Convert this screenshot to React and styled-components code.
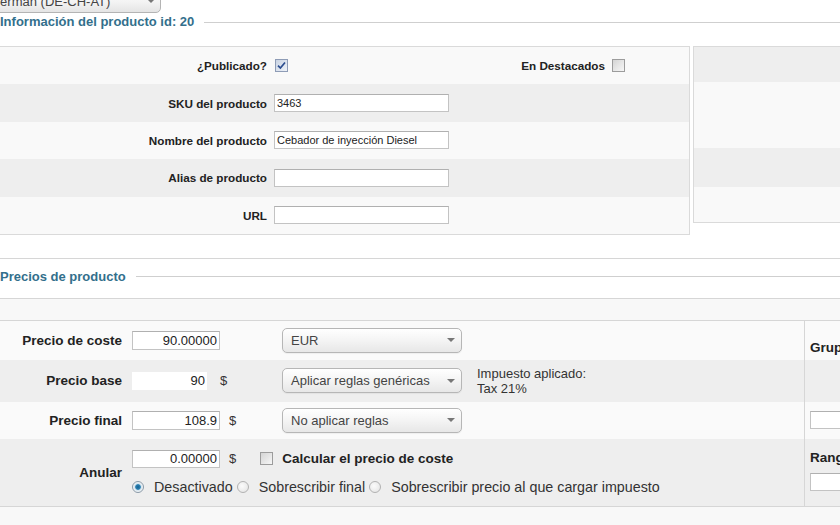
import React from 'react';
import styled, { createGlobalStyle } from 'styled-components';

const Global = createGlobalStyle`
  html, body { margin: 0; padding: 0; background: #fff; overflow: hidden; }
  body { font-family: "Liberation Sans", Arial, sans-serif; color: #333; }
`;

const Page = styled.div`
  width: 840px;
  height: 525px;
  overflow: hidden;
  background: #fff;
`;

const LangSelect = styled.div`
  box-sizing: border-box;
  width: 180px;
  height: 24px;
  margin: -11px 0 0 -19px;
  padding: 0 5px 0 8px;
  display: flex;
  align-items: center;
  justify-content: space-between;
  border: 1px solid #b4b4b4;
  border-radius: 5px;
  background: linear-gradient(#ffffff, #f3f3f3 55%, #e4e4e4);
  font-size: 13px;
  color: #444;
`;

const Arrow = styled.span`
  width: 0;
  height: 0;
  border-left: 4px solid transparent;
  border-right: 4px solid transparent;
  border-top: 4px solid #777;
`;

const Legend = styled.div`
  display: flex;
  align-items: center;
  gap: 10px;
  margin-top: ${p => p.$mt || 0}px;
  font-size: 13px;
  line-height: 16px;
  font-weight: bold;
  color: #336f8c;
  white-space: nowrap;
  &::after {
    content: '';
    flex: 1;
    border-top: 1px solid #cfcfcf;
  }
`;

const Panels = styled.div`
  display: flex;
  align-items: flex-start;
  margin-top: 16px;
`;

const InfoPanel = styled.div`
  box-sizing: border-box;
  flex: none;
  width: 691px;
  margin-left: -1px;
  border: 1px solid #dadada;
`;

const InfoRow = styled.div`
  display: grid;
  grid-template-columns: 267px 175px 149px 1fr;
  column-gap: 7px;
  align-items: center;
  height: 37.4px;
  background: ${p => (p.$alt ? '#eeeeee' : '#f9f9f9')};
`;

const InfoLabel = styled.div`
  text-align: right;
  font-size: 11.7px;
  font-weight: bold;
  color: #222;
  white-space: nowrap;
`;

const Cell = styled.div`
  display: flex;
  align-items: center;
`;

const SidePanel = styled.div`
  box-sizing: border-box;
  flex: none;
  width: 200px;
  margin-left: 3px;
  border: 1px solid #dadada;
`;

const SideRow = styled.div`
  height: ${p => p.$h}px;
  background: ${p => (p.$alt ? '#eeeeee' : '#f9f9f9')};
`;

const Rule = styled.div`
  margin-top: 23px;
  border-top: 1px solid #d6d6d6;
`;

const PriceTable = styled.div`
  margin-top: 13px;
  width: 960px;
  border-top: 1px solid #d6d6d6;
`;

const PriceHead = styled.div`
  height: 21px;
  background: #f8f8f8;
  border-bottom: 1px solid #d6d6d6;
`;

const PriceRow = styled.div`
  display: grid;
  grid-template-columns: 132px 150px 195px 327px 1fr;
  height: ${p => p.$h}px;
  background: ${p => (p.$alt ? '#eeeeee' : '#fafafa')};
`;

const PriceLabel = styled.div`
  display: flex;
  align-items: center;
  justify-content: flex-end;
  padding-right: 10px;
  font-size: 13.5px;
  font-weight: bold;
  color: #222;
  white-space: nowrap;
`;

const PriceCell = styled.div`
  display: flex;
  align-items: center;
  font-size: 13px;
  color: #333;
`;

const TaxNote = styled.div`
  font-size: 13px;
  line-height: 15px;
  color: #333;
`;

const SideCell = styled.div`
  display: flex;
  flex-direction: column;
  justify-content: ${p => p.$justify || 'center'};
  padding: ${p => p.$pad || '0'};
  padding-left: 5px;
  border-left: 1px solid #d6d6d6;
  font-size: 13.5px;
  line-height: 16px;
  font-weight: bold;
  color: #222;
  white-space: nowrap;
  overflow: hidden;
`;

const TextInput = styled.input`
  box-sizing: border-box;
  width: ${p => p.$w || 175}px;
  height: ${p => p.$h || 18}px;
  margin: 0;
  padding: 0 2px;
  border: ${p => (p.$plain ? '0' : '1px solid #c3c3c3')};
  border-top-color: ${p => (p.$plain ? 'transparent' : '#b0b0b0')};
  background: #fff;
  font-family: "Liberation Sans", Arial, sans-serif;
  font-size: ${p => p.$fs || 11}px;
  color: #222;
  text-align: ${p => (p.$right ? 'right' : 'left')};
  outline: none;
`;

const Currency = styled.span`
  margin-left: ${p => p.$gap || 9}px;
  font-size: 13px;
  color: #333;
`;

const Select = styled.div`
  box-sizing: border-box;
  width: 180px;
  height: 25px;
  padding: 0 6px 0 8px;
  display: flex;
  align-items: center;
  justify-content: space-between;
  border: 1px solid #b6b6b6;
  border-radius: 5px;
  background: linear-gradient(#ffffff, #f4f4f4 50%, #e7e7e7);
  box-shadow: 0 1px 1px rgba(0, 0, 0, 0.05);
  font-size: 13px;
  color: #444;
`;

const Box = styled.span`
  box-sizing: border-box;
  flex: none;
  display: inline-flex;
  align-items: center;
  justify-content: center;
  width: 13px;
  height: 13px;
  margin-left: ${p => p.$ml || 0}px;
  border: 1px solid ${p => (p.$checked ? '#8e9cb6' : '#9c9c9c')};
  background: ${p =>
    p.$checked
      ? 'linear-gradient(135deg, #c9d3e3, #eef2f8)'
      : 'linear-gradient(135deg, #d4d4d4, #f7f7f7)'};
`;

const Checkbox = ({ checked, ml }) => (
  <Box $checked={checked} $ml={ml}>
    {checked && (
      <svg width="9" height="9" viewBox="0 0 9 9">
        <path d="M1 4.6 L3.4 7 L8 1.5" fill="none" stroke="#2b4d8f" strokeWidth="1.7" />
      </svg>
    )}
  </Box>
);

const AnularBody = styled.div`
  grid-column: 2 / 5;
  display: flex;
  flex-direction: column;
  gap: 11px;
  padding-top: 11px;
`;

const Line = styled.div`
  display: flex;
  align-items: center;
`;

const CalcLabel = styled.span`
  margin-left: 9px;
  font-size: 13.5px;
  font-weight: bold;
  color: #222;
  white-space: nowrap;
`;

const RadioDot = styled.span`
  box-sizing: border-box;
  flex: none;
  width: 12px;
  height: 12px;
  border-radius: 50%;
  border: 1px solid ${p => (p.$on ? '#8a9aa8' : '#b2b2b2')};
  background: ${p =>
    p.$on
      ? 'radial-gradient(circle, #14618f 0, #2a80b2 2.4px, #cfe2ee 3.2px, #f6f6f6 5px)'
      : 'radial-gradient(circle at 40% 40%, #fbfbfb 0, #e2e2e2 100%)'};
`;

const RadioText = styled.span`
  margin: 0 4px 0 10px;
  font-size: 14.3px;
  line-height: 16px;
  color: #333;
  white-space: nowrap;
`;

const Radio = ({ on, children }) => (
  <>
    <RadioDot $on={on} />
    <RadioText>{children}</RadioText>
  </>
);

const SideInput = styled(TextInput)`
  margin-top: ${p => p.$mt || 0}px;
`;

const Tail = styled.div`
  border-top: 1px solid #d6d6d6;
  height: 30px;
  background: #f8f8f8;
`;

const infoRows = [
  { label: 'SKU del producto', value: '3463' },
  { label: 'Nombre del producto', value: 'Cebador de inyección Diesel' },
  { label: 'Alias de producto', value: '' },
  { label: 'URL', value: '' },
];

export default function App() {
  return (
    <>
      <Global />
      <Page>
        <LangSelect>
          <span>German (DE-CH-AT)</span>
          <Arrow />
        </LangSelect>

        <Legend $mt={1}>Información del producto id: 20</Legend>

        <Panels>
          <InfoPanel>
            <InfoRow>
              <InfoLabel>¿Publicado?</InfoLabel>
              <Cell>
                <Checkbox checked ml={1} />
              </Cell>
              <InfoLabel>En Destacados</InfoLabel>
              <Cell>
                <Checkbox />
              </Cell>
            </InfoRow>
            {infoRows.map((r, i) => (
              <InfoRow key={r.label} $alt={i % 2 === 0}>
                <InfoLabel>{r.label}</InfoLabel>
                <Cell>
                  <TextInput readOnly value={r.value} />
                </Cell>
              </InfoRow>
            ))}
          </InfoPanel>
          <SidePanel>
            <SideRow $h={35} $alt />
            <SideRow $h={66} />
            <SideRow $h={39} $alt />
            <SideRow $h={35} />
          </SidePanel>
        </Panels>

        <Rule />
        <Legend $mt={10}>Precios de producto</Legend>

        <PriceTable>
          <PriceHead />
          <PriceRow $h={39}>
            <PriceLabel>Precio de coste</PriceLabel>
            <PriceCell>
              <TextInput readOnly value="90.00000" $w={88} $h={19} $fs={13} $right />
            </PriceCell>
            <PriceCell>
              <Select>
                <span>EUR</span>
                <Arrow />
              </Select>
            </PriceCell>
            <PriceCell />
            <SideCell $justify="flex-end" $pad="0 0 4px">
              Grupo de compradores
            </SideCell>
          </PriceRow>

          <PriceRow $h={42} $alt>
            <PriceLabel>Precio base</PriceLabel>
            <PriceCell>
              <TextInput readOnly value="90" $w={75} $h={18} $fs={13} $right $plain />
              <Currency $gap={13}>$</Currency>
            </PriceCell>
            <PriceCell>
              <Select>
                <span>Aplicar reglas genéricas</span>
                <Arrow />
              </Select>
            </PriceCell>
            <PriceCell>
              <TaxNote>
                Impuesto aplicado:
                <br />
                Tax 21%
              </TaxNote>
            </PriceCell>
            <SideCell />
          </PriceRow>

          <PriceRow $h={37}>
            <PriceLabel>Precio final</PriceLabel>
            <PriceCell>
              <TextInput readOnly value="108.9" $w={88} $h={19} $fs={13} $right />
              <Currency>$</Currency>
            </PriceCell>
            <PriceCell>
              <Select>
                <span>No aplicar reglas</span>
                <Arrow />
              </Select>
            </PriceCell>
            <PriceCell />
            <SideCell>
              <SideInput readOnly value="" $w={90} />
            </SideCell>
          </PriceRow>

          <PriceRow $h={67} $alt>
            <PriceLabel>Anular</PriceLabel>
            <AnularBody>
              <Line>
                <TextInput readOnly value="0.00000" $w={88} $h={18} $fs={13} $right />
                <Currency>$</Currency>
                <Checkbox ml={24} />
                <CalcLabel>Calcular el precio de coste</CalcLabel>
              </Line>
              <Line>
                <Radio on>Desactivado</Radio>
                <Radio>Sobrescribir final</Radio>
                <Radio>Sobrescribir precio al que cargar impuesto</Radio>
              </Line>
            </AnularBody>
            <SideCell $justify="flex-start" $pad="11px 0 0">
              Rango de precios
              <SideInput readOnly value="" $w={90} $mt={7} />
            </SideCell>
          </PriceRow>
          <Tail />
        </PriceTable>
      </Page>
    </>
  );
}
